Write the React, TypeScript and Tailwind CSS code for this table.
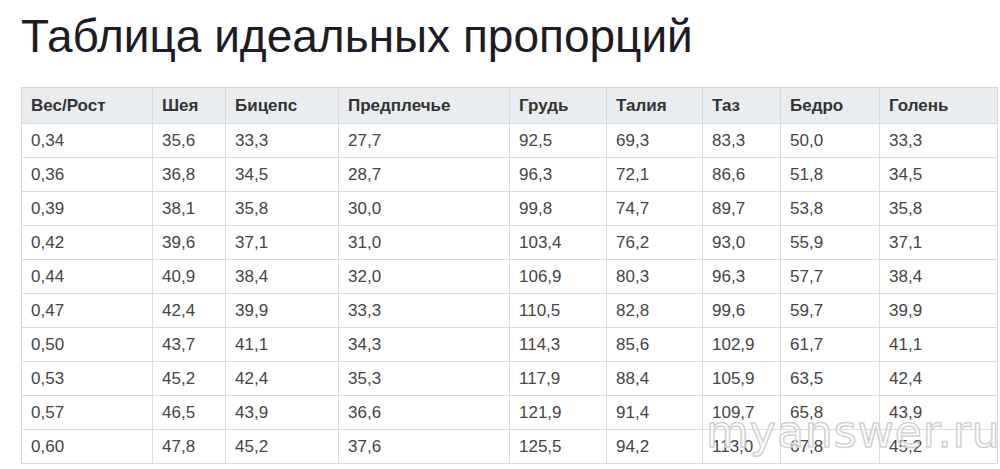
const columns = [
  { label: "Вес/Рост", width: "w-[131px]" },
  { label: "Шея", width: "w-[73px]" },
  { label: "Бицепс", width: "w-[113px]" },
  { label: "Предплечье", width: "w-[171px]" },
  { label: "Грудь", width: "w-[97px]" },
  { label: "Талия", width: "w-[96px]" },
  { label: "Таз", width: "w-[78px]" },
  { label: "Бедро", width: "w-[99px]" },
  { label: "Голень", width: "w-[118px]" },
];

const rows = [
  ["0,34", "35,6", "33,3", "27,7", "92,5", "69,3", "83,3", "50,0", "33,3"],
  ["0,36", "36,8", "34,5", "28,7", "96,3", "72,1", "86,6", "51,8", "34,5"],
  ["0,39", "38,1", "35,8", "30,0", "99,8", "74,7", "89,7", "53,8", "35,8"],
  ["0,42", "39,6", "37,1", "31,0", "103,4", "76,2", "93,0", "55,9", "37,1"],
  ["0,44", "40,9", "38,4", "32,0", "106,9", "80,3", "96,3", "57,7", "38,4"],
  ["0,47", "42,4", "39,9", "33,3", "110,5", "82,8", "99,6", "59,7", "39,9"],
  ["0,50", "43,7", "41,1", "34,3", "114,3", "85,6", "102,9", "61,7", "41,1"],
  ["0,53", "45,2", "42,4", "35,3", "117,9", "88,4", "105,9", "63,5", "42,4"],
  ["0,57", "46,5", "43,9", "36,6", "121,9", "91,4", "109,7", "65,8", "43,9"],
  ["0,60", "47,8", "45,2", "37,6", "125,5", "94,2", "113,0", "67,8", "45,2"],
];

const App = () => {
  return (
    <div className="relative w-[1000px] h-[469px] overflow-hidden bg-white font-['Liberation_Sans',Arial,sans-serif]">
      <h1 className="pl-[21px] pt-[8px] text-[46px] leading-[56px] text-[#1c1c26]">
        Таблица идеальных пропорций
      </h1>

      <table className="ml-[21px] mt-[23px] border-collapse table-fixed w-[976px] text-[17px] text-[#454545]">
        <thead>
          <tr className="bg-[#e9edf0]">
            {columns.map((col) => (
              <th
                key={col.label}
                className={`${col.width} h-[36px] border border-[#d6d9db] pl-[9px] text-left font-bold text-[#333]`}
              >
                {col.label}
              </th>
            ))}
          </tr>
        </thead>
        <tbody>
          {rows.map((row, i) => (
            <tr key={i}>
              {row.map((cell, j) => (
                <td key={j} className="h-[34px] border border-[#dcdcdc] pl-[9px]">
                  {cell}
                </td>
              ))}
            </tr>
          ))}
        </tbody>
      </table>

      {/* watermark */}
      <div className="absolute left-[706px] top-[410px] text-[44px] leading-none tracking-[1px] text-white/40 [-webkit-text-stroke:1.5px_#d2d2d2] font-['DejaVu_Sans',sans-serif]">
        myanswer.ru
      </div>
    </div>
  );
};

export default App;
